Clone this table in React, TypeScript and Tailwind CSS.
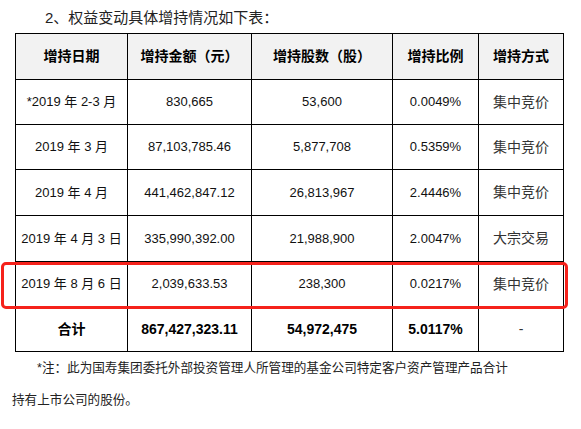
import React from "react";

const font = {
  fontFamily: '"Liberation Sans", "Noto Sans CJK SC", sans-serif',
};

type Row = { cells: string[]; bold?: boolean; h: string };

const rows: Row[] = [
  { cells: ["*2019 年 2-3 月", "830,665", "53,600", "0.0049%", "集中竞价"], h: "h-[45px]" },
  { cells: ["2019 年 3 月", "87,103,785.46", "5,877,708", "0.5359%", "集中竞价"], h: "h-[45px]" },
  { cells: ["2019 年 4 月", "441,462,847.12", "26,813,967", "2.4446%", "集中竞价"], h: "h-[46px]" },
  { cells: ["2019 年 4 月 3 日", "335,990,392.00", "21,988,900", "2.0047%", "大宗交易"], h: "h-[46px]" },
  { cells: ["2019 年 8 月 6 日", "2,039,633.53", "238,300", "0.0217%", "集中竞价"], h: "h-[45px]" },
  { cells: ["合计", "867,427,323.11", "54,972,475", "5.0117%", "-"], bold: true, h: "h-[45px]" },
];

const headers = ["增持日期", "增持金额（元）", "增持股数（股）", "增持比例", "增持方式"];

export default function App() {
  return (
    <div className="w-[581px] h-[429px] bg-white relative overflow-hidden" style={font}>
      <div className="pt-[8px] pl-[45px] text-[15px] leading-[20px] text-[#222] mb-[5px]">
        2、权益变动具体增持情况如下表：
      </div>
      <div className="ml-[15px] w-[549px] grid grid-cols-[112px_124px_141px_86px_85px] border-l border-t border-black">
        {headers.map((h, i) => (
          <div
            key={i}
            className="h-[46px] bg-[#f2f2f2] border-r border-b border-black flex items-center justify-center font-bold text-[14px] text-black"
          >
            {h}
          </div>
        ))}
        {rows.map((r, ri) =>
          r.cells.map((c, ci) => (
            <div
              key={ri + "-" + ci}
              className={
                r.h +
                " border-r border-b border-black flex items-center justify-center " +
                (ci === 4
                  ? "text-[14px] text-[#333]"
                  : r.bold
                  ? "font-bold text-[14px] text-black"
                  : "text-[13px] text-[#111]")
              }
            >
              {c}
            </div>
          ))
        )}
      </div>
      <div className="pl-[12px] text-[12.6px] leading-[32px] text-[#222]">
        <div className="pl-[25px]">*注：此为国寿集团委托外部投资管理人所管理的基金公司特定客户资产管理产品合计</div>
        <div>持有上市公司的股份。</div>
      </div>
      <div className="absolute left-[1px] top-[262px] w-[567px] h-[47px] border-[3px] border-[#f5221b] rounded-[5px] pointer-events-none" />
    </div>
  );
}
